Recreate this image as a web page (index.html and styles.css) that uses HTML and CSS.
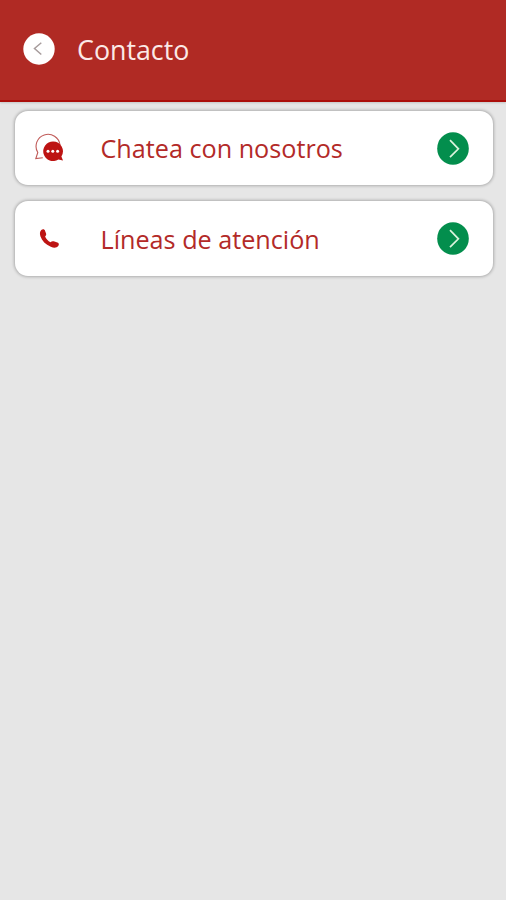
FILE: index.html
```html
<!DOCTYPE html>
<html lang="es">
  <head>
    <meta charset="utf-8">
    <title>Contacto</title>
    <link rel="stylesheet" href="styles.css">
  </head>
  <body>
    <header class="header">
      <svg class="back" viewBox="0 0 32 32">
        <circle cx="16" cy="16" r="15.7" fill="#fff" />
        <path d="M18.3 9.8L11.5 15.5l6.8 6" fill="none" stroke="#a79c9c" stroke-width="1.5" />
      </svg>
      <h1 class="title">Contacto</h1>
    </header>

    <main class="menu">
      <div class="card">
        <svg class="icon" viewBox="0 0 30 30">
          <path d="M26 12A12 12 0 1 0 3.8 19.5L1.8 25.5l7-.8" fill="none" stroke="#c05a58" stroke-width="1.1" />
          <path d="M19 8.500a9.800 9.800 0 1 0 5.400 18l4.600 1-1.600-4A9.800 9.800 0 0 0 19 8.500z" fill="#bd1413" />
          <g fill="#fff">
            <circle cx="14" cy="18.3" r="1.5" />
            <circle cx="18.8" cy="18.3" r="1.5" />
            <circle cx="23.6" cy="18.3" r="1.5" />
          </g>
        </svg>
        <span class="label">Chatea con nosotros</span>
        <svg class="arrow" viewBox="0 0 32 33">
          <ellipse cx="16" cy="16.5" rx="15.8" ry="16.3" fill="#038e4d" />
          <path d="M13 8.2l8.4 8.6-8.4 8.4" fill="none" stroke="#d9f3dc" stroke-width="1.7" />
        </svg>
      </div>
      <div class="card">
        <svg class="icon" viewBox="0 0 30 30">
          <path d="M7.3 6.1c1.5-1.2 3.2-.9 3.8.8l.9 2.4c.5 1.3.1 2.2-.9 3.1 1 2.5 2.9 4.5 5.4 5.8 1-1 2-1.3 3.2-.9l3.7 1.2c1.6.6 1.9 2.2.8 3.6-1.6 2-4.3 2.3-7.4.7C11.5 20.3 8 17 6.4 12.2c-.8-2.4-.6-4.8.9-6.1z" fill="#bd1413" />
        </svg>
        <span class="label">Líneas de atención</span>
        <svg class="arrow" viewBox="0 0 32 33">
          <ellipse cx="16" cy="16.5" rx="15.8" ry="16.3" fill="#038e4d" />
          <path d="M13 8.2l8.4 8.6-8.4 8.4" fill="none" stroke="#d9f3dc" stroke-width="1.7" />
        </svg>
      </div>
    </main>
  </body>
</html>
```
FILE: styles.css
```css
body {
  margin: 0;
  min-height: 100vh;
  background-color: #e6e6e6;
  font-family: "Open Sans", "Noto Sans", sans-serif;
}
.header {
  display: flex;
  align-items: center;
  height: 102px;
  padding: 0 23px 2px;
  box-sizing: border-box;
  background-color: #b02a24;
  border-bottom: 2px solid #ab0e0a;
  box-shadow: 0 1px 2px rgba(0, 0, 0, 0.15);
}
.back {
  width: 32px;
  height: 32px;
}
.title {
  margin: 1px 0 0 22px;
  color: #fbe9e7;
  font-size: 26.8px;
  font-weight: 400;
  line-height: 36px;
}
.menu {
  display: flex;
  flex-direction: column;
  gap: 16px;
  padding: 8.5px 13px 0 15px;
}
.card {
  display: flex;
  align-items: center;
  height: 74.5px;
  padding: 1px 24px 0 19px;
  box-sizing: border-box;
  background-color: #fff;
  border-radius: 13px;
  box-shadow: 0 0 3px 1px rgba(0, 0, 0, 0.25);
}
.icon {
  width: 30px;
  height: 30px;
}
.label {
  flex: 1;
  margin-left: 36.5px;
  color: #b32a28;
  font-size: 25.2px;
  line-height: 36px;
}
.arrow {
  width: 32px;
  height: 33px;
}
```
